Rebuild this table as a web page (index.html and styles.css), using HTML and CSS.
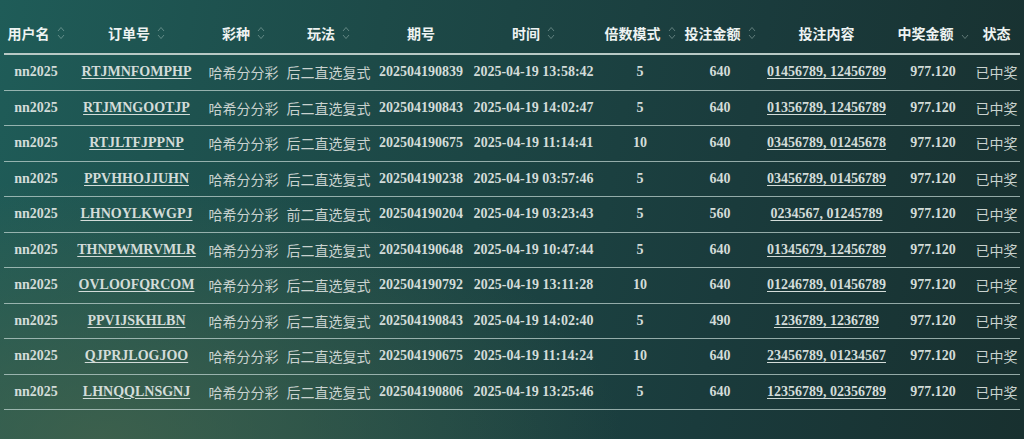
FILE: index.html
```html
<!DOCTYPE html>
<html lang="zh-CN">
<head>
<meta charset="utf-8">
<title>投注记录</title>
<link rel="stylesheet" href="styles.css">
</head>
<body>
<svg width="0" height="0" class="defs">
  <defs>
    <symbol id="sort" viewBox="0 0 8 16">
      <path d="M1 6 L4 2.5 L7 6" fill="none" stroke="currentColor" stroke-width="1"/>
      <path d="M1 10 L4 13.5 L7 10" fill="none" stroke="currentColor" stroke-width="1"/>
    </symbol>
    <symbol id="down" viewBox="0 0 8 16">
      <path d="M1 10 L4 13.5 L7 10" fill="none" stroke="currentColor" stroke-width="1"/>
    </symbol>
  </defs>
</svg>
<table class="bets">
  <colgroup>
    <col class="c1"><col class="c2"><col class="c3"><col class="c4"><col class="c5"><col class="c6"><col class="c7"><col class="c8"><col class="c9"><col class="c10"><col class="c11">
  </colgroup>
  <thead>
    <tr>
      <th><span class="h">用户名<svg class="ico"><use href="#sort"/></svg></span></th>
      <th><span class="h">订单号<svg class="ico"><use href="#sort"/></svg></span></th>
      <th><span class="h">彩种<svg class="ico"><use href="#sort"/></svg></span></th>
      <th><span class="h">玩法<svg class="ico"><use href="#sort"/></svg></span></th>
      <th><span class="h">期号</span></th>
      <th><span class="h">时间<svg class="ico"><use href="#sort"/></svg></span></th>
      <th><span class="h">倍数模式<svg class="ico"><use href="#sort"/></svg></span></th>
      <th><span class="h">投注金额<svg class="ico"><use href="#sort"/></svg></span></th>
      <th><span class="h">投注内容</span></th>
      <th><span class="h">中奖金额<svg class="ico"><use href="#down"/></svg></span></th>
      <th><span class="h">状态</span></th>
    </tr>
  </thead>
  <tbody>
    <tr><td class="lat">nn2025</td><td class="lat"><a href="#">RTJMNFOMPHP</a></td><td class="cn">哈希分分彩</td><td class="cn">后二直选复式</td><td class="lat">202504190839</td><td class="lat">2025-04-19 13:58:42</td><td class="lat">5</td><td class="lat">640</td><td class="lat"><a href="#">01456789, 12456789</a></td><td class="lat">977.120</td><td class="cn">已中奖</td></tr>
    <tr><td class="lat">nn2025</td><td class="lat"><a href="#">RTJMNGOOTJP</a></td><td class="cn">哈希分分彩</td><td class="cn">后二直选复式</td><td class="lat">202504190843</td><td class="lat">2025-04-19 14:02:47</td><td class="lat">5</td><td class="lat">640</td><td class="lat"><a href="#">01356789, 12456789</a></td><td class="lat">977.120</td><td class="cn">已中奖</td></tr>
    <tr><td class="lat">nn2025</td><td class="lat"><a href="#">RTJLTFJPPNP</a></td><td class="cn">哈希分分彩</td><td class="cn">后二直选复式</td><td class="lat">202504190675</td><td class="lat">2025-04-19 11:14:41</td><td class="lat">10</td><td class="lat">640</td><td class="lat"><a href="#">03456789, 01245678</a></td><td class="lat">977.120</td><td class="cn">已中奖</td></tr>
    <tr><td class="lat">nn2025</td><td class="lat"><a href="#">PPVHHOJJUHN</a></td><td class="cn">哈希分分彩</td><td class="cn">后二直选复式</td><td class="lat">202504190238</td><td class="lat">2025-04-19 03:57:46</td><td class="lat">5</td><td class="lat">640</td><td class="lat"><a href="#">03456789, 01456789</a></td><td class="lat">977.120</td><td class="cn">已中奖</td></tr>
    <tr><td class="lat">nn2025</td><td class="lat"><a href="#">LHNOYLKWGPJ</a></td><td class="cn">哈希分分彩</td><td class="cn">前二直选复式</td><td class="lat">202504190204</td><td class="lat">2025-04-19 03:23:43</td><td class="lat">5</td><td class="lat">560</td><td class="lat"><a href="#">0234567, 01245789</a></td><td class="lat">977.120</td><td class="cn">已中奖</td></tr>
    <tr><td class="lat">nn2025</td><td class="lat"><a href="#">THNPWMRVMLR</a></td><td class="cn">哈希分分彩</td><td class="cn">后二直选复式</td><td class="lat">202504190648</td><td class="lat">2025-04-19 10:47:44</td><td class="lat">5</td><td class="lat">640</td><td class="lat"><a href="#">01345679, 12456789</a></td><td class="lat">977.120</td><td class="cn">已中奖</td></tr>
    <tr><td class="lat">nn2025</td><td class="lat"><a href="#">OVLOOFQRCOM</a></td><td class="cn">哈希分分彩</td><td class="cn">后二直选复式</td><td class="lat">202504190792</td><td class="lat">2025-04-19 13:11:28</td><td class="lat">10</td><td class="lat">640</td><td class="lat"><a href="#">01246789, 01456789</a></td><td class="lat">977.120</td><td class="cn">已中奖</td></tr>
    <tr><td class="lat">nn2025</td><td class="lat"><a href="#">PPVIJSKHLBN</a></td><td class="cn">哈希分分彩</td><td class="cn">后二直选复式</td><td class="lat">202504190843</td><td class="lat">2025-04-19 14:02:40</td><td class="lat">5</td><td class="lat">490</td><td class="lat"><a href="#">1236789, 1236789</a></td><td class="lat">977.120</td><td class="cn">已中奖</td></tr>
    <tr><td class="lat">nn2025</td><td class="lat"><a href="#">QJPRJLOGJOO</a></td><td class="cn">哈希分分彩</td><td class="cn">后二直选复式</td><td class="lat">202504190675</td><td class="lat">2025-04-19 11:14:24</td><td class="lat">10</td><td class="lat">640</td><td class="lat"><a href="#">23456789, 01234567</a></td><td class="lat">977.120</td><td class="cn">已中奖</td></tr>
    <tr><td class="lat">nn2025</td><td class="lat"><a href="#">LHNQQLNSGNJ</a></td><td class="cn">哈希分分彩</td><td class="cn">后二直选复式</td><td class="lat">202504190806</td><td class="lat">2025-04-19 13:25:46</td><td class="lat">5</td><td class="lat">640</td><td class="lat"><a href="#">12356789, 02356789</a></td><td class="lat">977.120</td><td class="cn">已中奖</td></tr>
  </tbody>
</table>
</body>
</html>
```

FILE: styles.css
```css
html, body {
  margin: 0;
  height: 100%;
}
body {
  padding: 12px 4px 0 4px;
  box-sizing: border-box;
  overflow: hidden;
  background:
    radial-gradient(ellipse 520px 260px at 10% 100%, rgba(70,100,75,0.75), rgba(70,100,75,0) 100%),
    linear-gradient(100deg, #1f5c58 0%, #1d4a48 35%, #1a3b3c 70%, #18302f 100%);
  font-family: "Noto Sans CJK SC", "Noto Sans", sans-serif;
  color: #d2dad7;
}
.defs {
  position: absolute;
}
.bets {
  width: 1016px;
  table-layout: fixed;
  border-collapse: collapse;
}
.c1 { width: 64px; }
.c2 { width: 137px; }
.c3 { width: 77px; }
.c4 { width: 93px; }
.c5 { width: 92px; }
.c6 { width: 133px; }
.c7 { width: 80px; }
.c8 { width: 80px; }
.c9 { width: 133px; }
.c10 { width: 80px; }
.c11 { width: 47px; }
.bets th {
  height: 41px;
  padding: 0;
  font-size: 14px;
  font-weight: 700;
  color: #eef3f2;
  text-align: center;
  white-space: nowrap;
  border-bottom: 2px solid #b8c9c5;
}
.h {
  display: inline-flex;
  align-items: center;
}
.ico {
  width: 8px;
  height: 16px;
  margin-left: 7px;
  color: rgba(200, 220, 215, 0.4);
}
.bets td {
  height: 34.5px;
  padding: 0;
  text-align: center;
  white-space: nowrap;
  border-bottom: 1px solid rgba(190, 210, 205, 0.75);
}
.lat {
  font-family: "Liberation Serif", "Times New Roman", serif;
  font-weight: 700;
  font-size: 14px;
  color: #d3dcd9;
}
.cn {
  font-family: "Noto Sans CJK SC", sans-serif;
  font-size: 14px;
  color: #c9d2cf;
}
.lat a {
  color: #d3dcd9;
  text-decoration: underline;
  text-underline-offset: 2px;
}
```
